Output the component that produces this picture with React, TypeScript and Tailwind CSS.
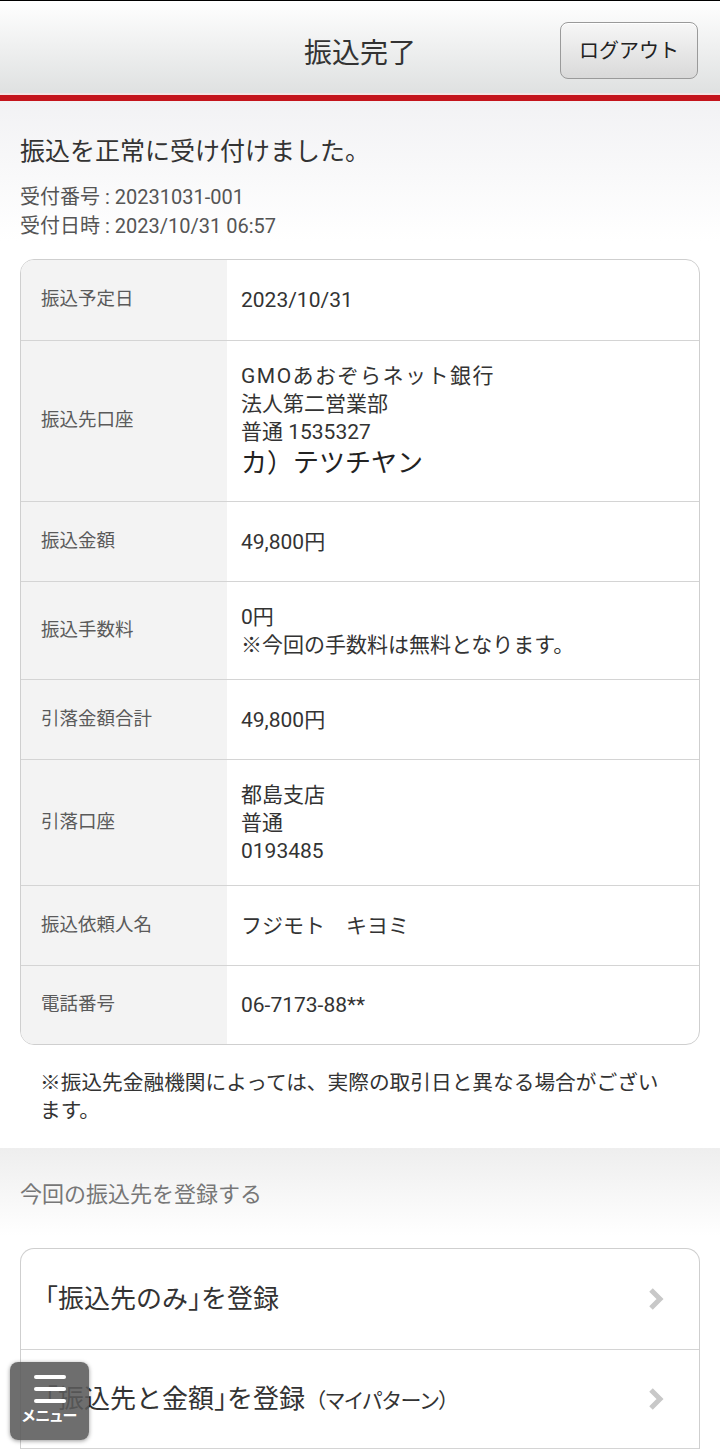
import * as React from "react";

const rows: { label: string; lines: React.ReactNode[]; h: string }[] = [
  { label: "振込予定日", lines: ["2023/10/31"], h: "h-[80px]" },
  {
    label: "振込先口座",
    lines: [
      <span className="tracking-[1.5px]">GMOあおぞらネット銀行</span>,
      "法人第二営業部",
      "普通 1535327",
      <span className="text-[26px] leading-[34px] text-[#222]">カ）テツチヤン</span>,
    ],
    h: "h-[161px]",
  },
  { label: "振込金額", lines: ["49,800円"], h: "h-[80px]" },
  {
    label: "振込手数料",
    lines: ["0円", "※今回の手数料は無料となります。"],
    h: "h-[98px]",
  },
  { label: "引落金額合計", lines: ["49,800円"], h: "h-[80px]" },
  { label: "引落口座", lines: ["都島支店", "普通", "0193485"], h: "h-[126px]" },
  { label: "振込依頼人名", lines: ["フジモト　キヨミ"], h: "h-[80px]" },
  { label: "電話番号", lines: ["06-7173-88**"], h: "h-[79px]" },
];

const Chevron = () => (
  <svg width="18" height="26" viewBox="0 0 18 26" className="shrink-0">
    <path d="M4 4 L13 13 L4 22" fill="none" stroke="#c8c8c8" strokeWidth="5" />
  </svg>
);

const Half = ({ children }: { children: React.ReactNode }) => (
  <span className="[font-feature-settings:'halt']">{children}</span>
);

export default function App() {
  return (
    <div className="relative w-[720px] min-h-[1453px] bg-white font-['Roboto','Noto_Sans_CJK_JP',sans-serif] text-[#333] overflow-hidden">
      <header className="border-t border-black bg-gradient-to-b from-white to-[#dfe1e1] h-[93px] flex items-center justify-center relative">
        <h1 className="text-[28px] text-[#333] pt-[14px]">振込完了</h1>
        <button className="absolute right-[22px] top-[21px] w-[138px] h-[57px] rounded-[8px] border border-[#9a9a9a] bg-gradient-to-b from-[#f7f7f7] to-[#d9d9d9] text-[20px] text-[#222] shadow-[inset_0_1px_0_#fff]">
          ログアウト
        </button>
      </header>
      <div className="h-[2px] bg-[#f3e3e3]" />
      <div className="h-[6px] bg-[#c4141c]" />
      <div className="bg-gradient-to-b from-[#f2f2f4] to-white px-[20px] pt-[34px]">
        <p className="text-[25px] leading-[34px] text-[#333]">振込を正常に受け付けました。</p>
        <div className="mt-[14px] text-[20px] leading-[29px] text-[#555]">
          <p>受付番号 : 20231031-001</p>
          <p>受付日時 : 2023/10/31 06:57</p>
        </div>
      </div>

      <div className="mx-[20px] mt-[18px] rounded-[14px] border border-[#cfcfcf] overflow-hidden">
        {rows.map((r, i) => (
          <div
            key={r.label}
            className={`flex ${r.h} ${i > 0 ? "border-t border-[#d4d4d4]" : ""}`}
          >
            <div className="w-[206px] shrink-0 bg-[#f3f3f3] flex items-center pl-[20px] text-[18.5px] text-[#5a5a5a]">
              {r.label}
            </div>
            <div className="flex-1 flex flex-col justify-center pl-[14px] text-[21px] leading-[28px] text-[#333]">
              {r.lines.map((l, j) => (
                <div key={j}>{l}</div>
              ))}
            </div>
          </div>
        ))}
      </div>

      <p className="pl-[40px] pr-[52px] pt-[24px] pb-[23px] text-[20.7px] leading-[28px] text-[#333]">
        ※振込先金融機関によっては、実際の取引日と異なる場合がございます。
      </p>

      <div className="bg-gradient-to-b from-[#eeeeee] to-white h-[88px] px-[20px] pt-[32px]">
        <p className="text-[22px] leading-[30px] text-[#777]">今回の振込先を登録する</p>
      </div>

      <div className="mx-[20px] mt-[12px] rounded-t-[14px] border border-b-0 border-[#cfcfcf]">
        <div className="h-[100px] flex items-center justify-between pl-[24px] pr-[34px]">
          <span className="text-[26px] text-[#333]">
            <Half>「</Half>振込先のみ<Half>」</Half>を登録
          </span>
          <Chevron />
        </div>
        <div className="h-[100px] flex items-center justify-between pl-[24px] pr-[34px] border-t border-[#d4d4d4] border-b">
          <span className="text-[26px] text-[#333]">
            <Half>「</Half>振込先と金額<Half>」</Half>を登録
            <span className="text-[21px] ml-[10px] [font-feature-settings:'palt']">（マイパターン）</span>
          </span>
          <Chevron />
        </div>
      </div>

      <button className="absolute left-[10px] top-[1362px] w-[79px] h-[78px] rounded-[8px] bg-[rgba(90,90,90,0.88)] shadow-[0_1px_4px_rgba(0,0,0,0.4)] flex flex-col items-center pt-[13px]">
        <div className="flex flex-col gap-[8px] w-[32px]">
          <span className="h-[4px] bg-white rounded-full" />
          <span className="h-[4px] bg-white rounded-full" />
          <span className="h-[4px] bg-white rounded-full" />
        </div>
        <span className="text-white text-[15px] font-bold leading-none mt-[6px] [font-feature-settings:'palt']">メニュー</span>
      </button>
    </div>
  );
}
